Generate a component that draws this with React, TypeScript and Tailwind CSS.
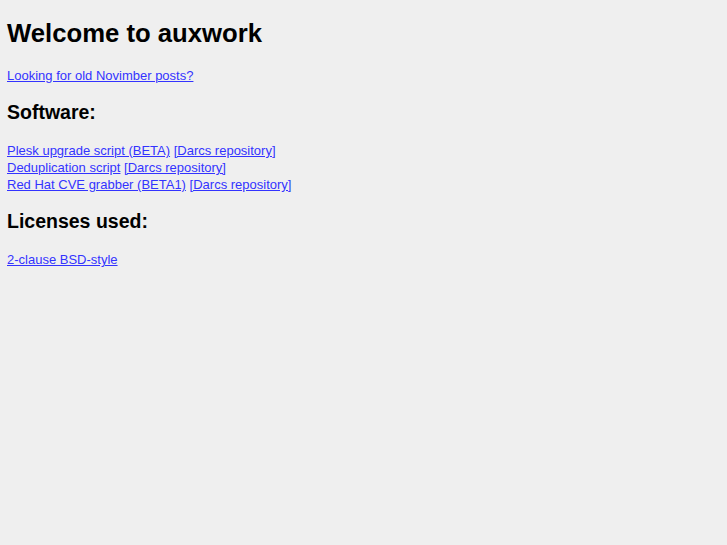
const software = [
  { name: 'Plesk upgrade script (BETA)' },
  { name: 'Deduplication script' },
  { name: 'Red Hat CVE grabber (BETA1)' },
]

export default function App() {
  return (
    <div className="min-h-[545px] bg-[#efefef] pl-[7px] pr-2 pt-[18px] pb-2 text-[13px] leading-[17px] text-black [font-family:'Liberation_Sans',Arial,sans-serif]">
      <h1 className="text-[25.7px] leading-[30px] font-bold">Welcome to auxwork</h1>
      <p className="mt-[19px]">
        <a href="#" className="text-[#3333ff] underline">
          Looking for old Novimber posts?
        </a>
      </p>
      <h2 className="mt-[17px] text-[19.5px] leading-[23px] font-bold">Software:</h2>
      <p className="mt-[18px]">
        {software.map((item) => (
          <span key={item.name}>
            <a href="#" className="text-[#3333ff] underline">
              {item.name}
            </a>{' '}
            <a href="#" className="text-[#3333ff] underline">
              [Darcs repository]
            </a>
            <br />
          </span>
        ))}
      </p>
      <h2 className="mt-[17px] text-[19.5px] leading-[23px] font-bold">Licenses used:</h2>
      <p className="mt-[18px]">
        <a href="#" className="text-[#3333ff] underline">
          2-clause BSD-style
        </a>
      </p>
    </div>
  )
}
